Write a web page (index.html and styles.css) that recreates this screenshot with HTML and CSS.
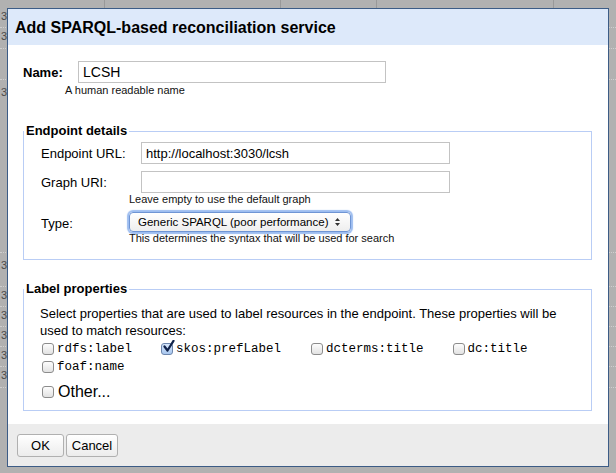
FILE: index.html
```html
<!DOCTYPE html>
<html>
<head>
<meta charset="utf-8">
<link rel="stylesheet" href="styles.css">
</head>
<body>
<div class="sheet">
  <div class="srow h8"></div>
  <div class="srow h20"><span>3</span></div>
  <div class="srow h21"><span>3</span></div>
  <div class="srow h31"></div>
  <div class="srow h173"><span class="pt">3</span></div>
  <div class="srow h34"><span class="pt2">3</span></div>
  <div class="srow h20"><span>3</span></div>
  <div class="srow h20"><span>3</span></div>
  <div class="srow h20"><span>3</span></div>
  <div class="srow h20"><span>3</span></div>
  <div class="srow h21"><span>3</span></div>
</div>

<div class="dialog">
  <div class="dlg-header">Add SPARQL-based reconciliation service</div>
  <div class="dlg-body">
    <div class="name-row">
      <label class="name-label" for="name">Name:</label>
      <input id="name" class="text-input name-input" type="text" value="LCSH">
    </div>
    <div class="hint name-hint">A human readable name</div>

    <fieldset class="group endpoint">
      <legend>Endpoint details</legend>
      <div class="ep-grid">
        <div class="ep-label">Endpoint URL:</div>
        <div class="ep-field"><input class="text-input ep-input" type="text" value="http://localhost:3030/lcsh"></div>
        <div class="ep-label row2">Graph URI:</div>
        <div class="ep-field row2"><input class="text-input ep-input" type="text" value=""></div>
        <div></div>
        <div class="hint">Leave empty to use the default graph</div>
        <div class="ep-label type-row">Type:</div>
        <div class="ep-field type-row">
          <div class="select">
            <span class="select-text">Generic SPARQL (poor performance)</span>
            <svg class="arrows" width="7" height="10" viewBox="0 0 7 10"><path d="M1 4 L3.5 1 L6 4 Z M1 6 L3.5 9 L6 6 Z" fill="#333"/></svg>
          </div>
        </div>
        <div></div>
        <div class="hint">This determines the syntax that will be used for search</div>
      </div>
    </fieldset>

    <fieldset class="group labels">
      <legend>Label properties</legend>
      <div class="labels-inner">
        <p class="desc">Select properties that are used to label resources in the endpoint. These properties will be used to match resources:</p>
        <div class="checks">
          <span class="check"><span class="box"></span><span class="mono">rdfs:label</span></span>
          <span class="check"><span class="box checked"><svg width="14" height="14" viewBox="0 0 14 14"><path d="M2.5 6.5 L5.5 10.5 L11.5 0.8" fill="none" stroke="#10224a" stroke-width="2.2" stroke-linecap="round" stroke-linejoin="round"/></svg></span><span class="mono">skos:prefLabel</span></span>
          <span class="check"><span class="box"></span><span class="mono">dcterms:title</span></span>
          <span class="check"><span class="box"></span><span class="mono">dc:title</span></span>
          <span class="check"><span class="box"></span><span class="mono">foaf:name</span></span>
        </div>
        <div class="other"><span class="box"></span><span class="other-text">Other...</span></div>
      </div>
    </fieldset>
  </div>
  <div class="dlg-footer">
    <button class="btn btn-ok">OK</button>
    <button class="btn btn-cancel">Cancel</button>
  </div>
</div>
</body>
</html>
```

FILE: styles.css
```css
html, body {
  margin: 0;
  padding: 0;
}
body {
  width: 616px;
  height: 473px;
  overflow: hidden;
  background: #b1b1b1;
  font-family: "Liberation Sans", Arial, sans-serif;
  font-size: 13px;
  color: #000;
  position: relative;
}

/* underlying spreadsheet */
.sheet {
  display: flex;
  flex-direction: column;
}
.srow {
  box-sizing: border-box;
  border-bottom: 1px dotted #cfcfcf;
  font-size: 11px;
  line-height: 13px;
  color: #4a4a4a;
  padding-left: 1px;
}
.srow span { display: block; padding-top: 2px; }
.srow .pt { padding-top: 6px; }
.srow .pt2 { padding-top: 6px; }
.h8 { height: 8px; border-bottom: none; background: linear-gradient(to right, transparent 104px, #999 104px, #999 105px, transparent 105px, transparent 280px, #999 280px, #999 281px, transparent 281px, transparent 376px, #999 376px, #999 377px, transparent 377px, transparent 553px, #999 553px, #999 554px, transparent 554px); }
.h20 { height: 20px; }
.h21 { height: 21px; }
.h31 { height: 31px; }
.h34 { height: 34px; }
.h173 { height: 173px; }

/* dialog */
.dialog {
  position: absolute;
  left: 7px;
  top: 8px;
  width: 600px;
  height: 457px;
  border: 1px solid #3c5c86;
  background: #fff;
  display: flex;
  flex-direction: column;
}
.dlg-header {
  height: 36px;
  line-height: 37px;
  background: #dde9fa;
  padding-left: 7px;
  font-weight: bold;
  font-size: 16px;
}
.dlg-body {
  flex: 1;
  padding: 16px 16px 0 15px;
}
.name-row {
  display: flex;
  align-items: center;
}
.name-label {
  width: 55px;
  font-weight: bold;
  font-size: 13px;
}
.text-input {
  box-sizing: border-box;
  height: 22px;
  border: 1px solid #c3c3c3;
  padding: 0 0 0 4px;
  margin: 0;
  font-family: "Liberation Sans", Arial, sans-serif;
  color: #000;
  background: #fff;
  outline: none;
}
.name-input {
  width: 308px;
  font-size: 14px;
}
.hint {
  font-size: 11px;
  line-height: 13px;
  color: #111;
}
.name-hint {
  margin: 1px 0 0 42px;
}

fieldset.group {
  margin: 0;
  padding: 0;
  border: 1px solid #b9cdf5;
  min-width: 0;
}
fieldset.group legend {
  padding: 0 2px;
  margin-left: 0;
  font-weight: bold;
  font-size: 13px;
  line-height: 16px;
}
fieldset.endpoint {
  margin-top: 26px;
}
.ep-grid {
  display: grid;
  grid-template-columns: 88px 1fr;
  align-items: center;
  padding: 3px 0 14px 17px;
}
.ep-label {
  font-size: 13px;
}
.ep-field {
  display: flex;
}
.ep-input {
  margin-left: 12px;
  width: 309px;
  font-size: 13px;
}
.row2 {
  margin-top: 7px;
}
.type-row {
  margin-top: 6px;
}
.type-row.ep-label {
  padding-top: 2px;
}
.select {
  box-sizing: border-box;
  width: 222px;
  height: 20px;
  border: 1px solid #6f95d4;
  border-radius: 4px;
  box-shadow: 0 0 1px 2px #9dbdf0;
  background: linear-gradient(#ffffff, #eeeeee);
  display: flex;
  align-items: center;
  justify-content: space-between;
  padding: 0 9px 0 8px;
  font-size: 11.5px;
  white-space: nowrap;
}
.select-text {
  white-space: nowrap;
}
.arrows { display: block; flex: none; }

fieldset.labels {
  margin-top: 21px;
}
.labels-inner {
  padding: 0 0 7px 16px;
}
.desc {
  margin: 8px 0 0 0;
  line-height: 17px;
  padding-right: 10px;
}
.checks {
  display: flex;
  flex-wrap: wrap;
  padding-left: 2px;
  margin-top: 1px;
}
.check {
  display: inline-flex;
  align-items: center;
  height: 18px;
  margin-right: 29px;
}
.check:nth-child(2) { margin-right: 30px; }
.box {
  box-sizing: border-box;
  width: 12px;
  height: 12px;
  border: 1px solid #8c8c8c;
  border-radius: 3px;
  background: linear-gradient(#fdfdfd, #e2e2e2);
  margin-right: 3px;
  position: relative;
  flex: none;
}
.box.checked {
  background: linear-gradient(#d6e6fb, #a9c7ef);
  border-color: #6d86ad;
}
.box.checked svg {
  position: absolute;
  left: 0;
  top: -4px;
}
.mono {
  font-family: "Liberation Mono", "Courier New", monospace;
  font-size: 12.5px;
}
.other {
  display: flex;
  align-items: center;
  height: 22px;
  margin-top: 5px;
  padding-left: 2px;
}
.other-text {
  font-size: 16px;
  margin-left: 1px;
}

.dlg-footer {
  height: 42px;
  background: #ececec;
  padding: 10px 0 0 9px;
  box-sizing: border-box;
  display: flex;
  align-items: flex-start;
  gap: 2px;
}
.btn {
  box-sizing: border-box;
  height: 23px;
  margin: 0;
  padding: 0;
  border: 1px solid #b0b0b0;
  border-radius: 3px;
  background: linear-gradient(#ffffff, #ececec);
  font-family: "Liberation Sans", Arial, sans-serif;
  font-size: 13px;
  color: #000;
}
.btn-ok { width: 47px; }
.btn-cancel { width: 52px; }
```
